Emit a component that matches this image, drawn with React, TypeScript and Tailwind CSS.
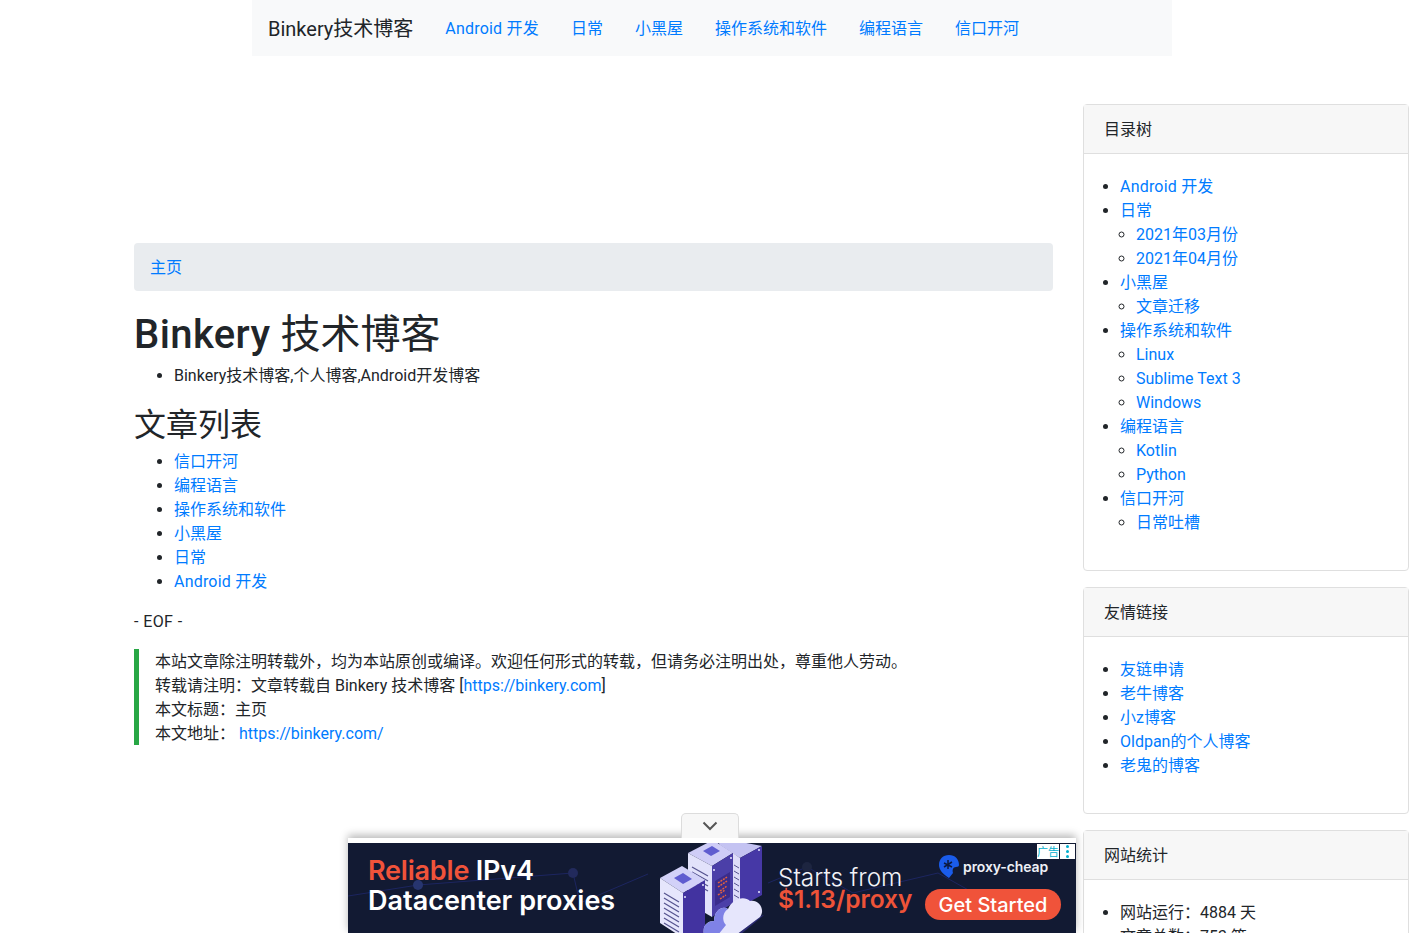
import React from 'react'

const navItems = ['Android 开发', '日常', '小黑屋', '操作系统和软件', '编程语言', '信口开河']
const articles = ['信口开河', '编程语言', '操作系统和软件', '小黑屋', '日常', 'Android 开发']

interface TreeNode {
  name: string
  children?: string[]
}

const tree: TreeNode[] = [
  { name: 'Android 开发' },
  { name: '日常', children: ['2021年03月份', '2021年04月份'] },
  { name: '小黑屋', children: ['文章迁移'] },
  { name: '操作系统和软件', children: ['Linux', 'Sublime Text 3', 'Windows'] },
  { name: '编程语言', children: ['Kotlin', 'Python'] },
  { name: '信口开河', children: ['日常吐槽'] },
]

const friends = ['友链申请', '老牛博客', '小z博客', 'Oldpan的个人博客', '老鬼的博客']

const Link: React.FC<{ children: React.ReactNode }> = ({ children }) => {
  const wide = typeof children === 'string' && children.startsWith('Android')
  return (
    <a href="#" className={wide ? 'text-[#007bff] tracking-[0.2px]' : 'text-[#007bff]'}>
      {children}
    </a>
  )
}

const Card: React.FC<{ title: string; children: React.ReactNode; className?: string }> = ({
  title,
  children,
  className = '',
}) => (
  <div className={`border border-[#dfdfdf] rounded-[4px] ${className}`}>
    <div className="h-[49px] px-5 pt-[2px] flex items-center bg-[#f7f7f7] border-b border-[#dfdfdf] text-[#212529]">{title}</div>
    <div className="px-5 pt-[21px]">{children}</div>
  </div>
)

const AdArt: React.FC = () => (
  <svg width="110" height="90" viewBox="0 0 110 90" className="absolute left-[312px] top-0">
    {/* back tower */}
    <path d="M55 -6 L102 3 L80 15 L60 2 Z" fill="#c4c3f2" />
    <path d="M73 10 L80 15 L80 66 L73 62 Z" fill="#dddcf9" />
    <path d="M74 22 L79 25 M74 28 L79 31 M74 34 L79 37 M74 40 L79 43 M74 46 L79 49 M74 52 L79 55" stroke="#55538f" strokeWidth="1" />
    <path d="M80 15 L102 3 L102 52 L80 64 Z" fill="#4638a6" />
    <circle cx="99" cy="7" r="1" fill="#e8e8ff" />
    <circle cx="99" cy="49" r="1" fill="#e8e8ff" />
    {/* middle tower */}
    <path d="M28 10 L53 -3 L73 10 L52 23 Z" fill="#cfcdf7" />
    <path d="M43 8 L52 3 L60 8 L51 13 Z" fill="#5f5cd0" />
    <path d="M28 10 L52 23 L52 74 L28 60 Z" fill="#e2e2fb" />
    <path d="M32 24 L48 33 M32 29 L48 38 M32 34 L48 43 M32 39 L48 48" stroke="#55538f" strokeWidth="1.2" />
    <path d="M52 23 L73 10 L73 60 L52 74 Z" fill="#4b3fa8" />
    <path d="M55 38 L70 29 L70 54 L55 63 Z" fill="#3a2c8c" />
    <path d="M58 40 L67 34 M58 44 L67 38 M60 48 L67 43 M58 52 L65 47 M60 56 L66 52" stroke="#e5623d" strokeWidth="1.5" strokeDasharray="2 1" />
    <circle cx="54" cy="27" r="1" fill="#e8e8ff" />
    <circle cx="71" cy="15" r="1" fill="#e8e8ff" />
    {/* front tower */}
    <path d="M0 35 L22 23 L45 37 L23 50 Z" fill="#d2d1f8" />
    <path d="M14 35 L23 30 L32 36 L23 41 Z" fill="#5f5cd0" />
    <path d="M0 35 L23 50 L23 95 L0 80 Z" fill="#e6e6fc" />
    <path d="M4 50 L19 59 M4 55 L19 64 M4 60 L19 69 M4 65 L19 74 M4 70 L19 79 M4 75 L19 84 M4 80 L19 89" stroke="#55538f" strokeWidth="1.2" />
    <path d="M23 50 L45 37 L45 90 L23 95 Z" fill="#4233a0" />
    <circle cx="25" cy="54" r="1" fill="#e8e8ff" />
    <circle cx="43" cy="42" r="1" fill="#e8e8ff" />
    {/* cloud */}
    <path d="M42 92 L64 80 L104 72 L80 92 Z" fill="#2a2a70" />
    <path d="M44 92 C42 82 48 78 54 78 C54 68 62 62 68 66 C72 56 84 52 90 58 C98 56 106 66 100 74 L76 92 Z" fill="#e6e6fc" />
    <path d="M44 92 C42 82 48 78 54 78 C54 68 62 62 68 66 C62 70 62 78 66 82 L58 92 Z" fill="#7f82e6" />
  </svg>
)

const AdBackdrop: React.FC = () => (
  <svg width="728" height="90" viewBox="0 0 728 90" className="absolute inset-0">
    <path d="M0 53 L70 42 L225 30 L232 60 L300 31 M420 40 L459 24 L505 50 L590 30 L640 58 L690 50" fill="none" stroke="#1c2560" strokeWidth="1" />
    <circle cx="70" cy="42" r="5" fill="#27356f" />
    <circle cx="225" cy="30" r="5" fill="#222a5c" />
    <circle cx="459" cy="24" r="5" fill="#1d2540" />
  </svg>
)

const AdBanner: React.FC = () => (
  <div className="fixed left-[348px] bottom-0 w-[728px] h-[95px] pt-[5px] bg-white shadow-[0_-3px_8px_rgba(0,0,0,0.28)]">
    <div className="absolute left-[333px] -top-[25px] w-[58px] h-[25px] bg-[#f7f7f7] border border-b-0 border-[#dcdcdc] rounded-t-[5px] flex items-center justify-center">
      <svg width="16" height="10" viewBox="0 0 16 10" fill="none" stroke="#555" strokeWidth="2">
        <path d="M1.5 1.5 L8 8 L14.5 1.5" />
      </svg>
    </div>
    <div className='relative h-[90px] bg-[#121a33] overflow-hidden font-["Inter",sans-serif]'>
      <AdBackdrop />
      <AdArt />
      <div className="absolute left-5 top-[13px] text-[27px] leading-[30px] font-semibold text-white">
        <div className="tracking-[-0.2px]">
          <span className="text-[#f0533a]">Reliable</span> IPv4
        </div>
        <div>Datacenter proxies</div>
      </div>
      <div className="absolute left-[430px] top-[22px] text-[#f2f3f8] text-[24.4px] leading-[24px] font-light">
        <div>Starts from</div>
        <div className="text-[#ee5338] font-semibold text-[24.5px] leading-[21px]">$1.13/proxy</div>
      </div>
      <div className="absolute left-[591px] top-[12px] flex items-center gap-[4px]">
        <svg width="20" height="24" viewBox="0 0 20 24">
          <path d="M10 0 C16 0 20 4 20 10 C20 11 19 12 17 12 C14 12 13 15 14 18 L10 23 C4 19 0 15 0 10 C0 4 4 0 10 0 Z" fill="#1a5ceb" />
          <path d="M9 5 V14 M5 8 L13 12 M13 7 L5 12" stroke="#0c1a40" strokeWidth="1.5" />
        </svg>
        <span className="text-[#eef0f6] text-[14px] font-semibold tracking-[-0.1px]">proxy-cheap</span>
      </div>
      <div className="absolute left-[577px] top-[46px] w-[136px] h-[31px] rounded-full bg-[#f0533a] text-white text-[20px] font-medium flex items-center justify-center">
        Get Started
      </div>
      <div className="absolute right-px top-px flex gap-px">
        <div className='w-[22px] h-[15px] bg-white text-[#00aecd] text-[11px] leading-[15px] text-center font-["Noto_Sans_CJK_SC",sans-serif]'>广告</div>
        <div className="w-[15px] h-[15px] bg-white flex flex-col items-center justify-center gap-[2px]">
          <span className="w-[3px] h-[3px] rounded-full bg-[#00aecd]" />
          <span className="w-[3px] h-[3px] rounded-full bg-[#00aecd]" />
          <span className="w-[3px] h-[3px] rounded-full bg-[#00aecd]" />
        </div>
      </div>
    </div>
  </div>
)

export default function App() {
  return (
    <div className='h-screen overflow-hidden bg-white text-[#212529] text-base leading-6 font-["Roboto","Noto_Sans_CJK_SC",sans-serif]'>
      <nav className="w-[920px] h-14 ml-[252px] pt-[2px] bg-[#f8f9fa] flex items-center pl-4">
        <a href="#" className="text-xl leading-[30px] mr-4 text-[#212529]">Binkery技术博客</a>
        <div className="flex">
          {navItems.map((item) => (
            <div key={item} className="px-4"><Link>{item}</Link></div>
          ))}
        </div>
      </nav>

      <div className="flex pl-[134px] gap-[30px]">
        <main className="w-[919px] pt-[187px]">
          <div className="h-12 px-4 pt-[2px] flex items-center rounded-[4px] bg-[#e9ecef]">
            <Link>主页</Link>
          </div>
          <h1 className="mt-5 text-[40px] leading-[48px] font-normal">
            <span className="font-medium tracking-[0.4px]">Binkery</span> 技术博客
          </h1>
          <ul className="mt-[5px] pl-10 list-disc">
            <li>Binkery技术博客,个人博客,Android开发博客</li>
          </ul>
          <h2 className="mt-[18px] text-[32px] leading-[38px] font-normal">文章列表</h2>
          <ul className="mt-[6px] pl-10 list-disc">
            {articles.map((a) => (
              <li key={a}><Link>{a}</Link></li>
            ))}
          </ul>
          <p className="mt-4 tracking-[0.4px]">- EOF -</p>
          <blockquote className="mt-[15px] h-24 pt-px border-l-[5px] border-[#28a745] pl-4">
            <p>本站文章除注明转载外，均为本站原创或编译。欢迎任何形式的转载，但请务必注明出处，尊重他人劳动。</p>
            <p>转载请注明：文章转载自 Binkery 技术博客 [<Link>https://binkery.com</Link>]</p>
            <p>本文标题：主页</p>
            <p>本文地址：&nbsp;<Link>https://binkery.com/</Link></p>
          </blockquote>
        </main>

        <aside className="w-[326px] pt-12 flex flex-col gap-4">
          <Card title="目录树" className="h-[467px]">
            <ul className="list-disc pl-4">
              {tree.map((node) => (
                <li key={node.name}>
                  <Link>{node.name}</Link>
                  {node.children && (
                    <ul className="list-[circle] pl-4">
                      {node.children.map((c) => (
                        <li key={c}><Link>{c}</Link></li>
                      ))}
                    </ul>
                  )}
                </li>
              ))}
            </ul>
          </Card>
          <Card title="友情链接" className="h-[227px]">
            <ul className="list-disc pl-4">
              {friends.map((f) => (
                <li key={f}><Link>{f}</Link></li>
              ))}
            </ul>
          </Card>
          <Card title="网站统计">
            <ul className="list-disc pl-4">
              <li>网站运行：4884 天</li>
              <li>文章总数：753 篇</li>
            </ul>
          </Card>
        </aside>
      </div>

      <AdBanner />
    </div>
  )
}
